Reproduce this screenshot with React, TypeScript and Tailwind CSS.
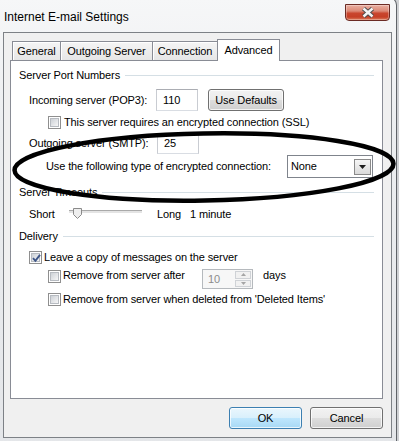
import React from 'react';

function Check({ checked = false }: { checked?: boolean }) {
  return (
    <span className="relative flex h-[13px] w-[13px] shrink-0 items-center justify-center border border-[#8f8f8f] bg-white">
      <span className="h-[9px] w-[9px] border border-[#b7bbc1] bg-[linear-gradient(135deg,#cdd1d6,#f6f6f7)]" />
      {checked && (
        <svg className="absolute left-[1px] top-[1px]" width="11" height="11" viewBox="0 0 11 11">
          <path d="M2 5.2 L4.4 7.8 L9 1.8" fill="none" stroke="#3e5688" strokeWidth="1.9" />
        </svg>
      )}
    </span>
  );
}

function Group({ title, className }: { title: string; className: string }) {
  return (
    <div className={`flex h-[14px] items-center pl-[8px] ${className}`}>
      <span className="leading-[14px]">{title}</span>
      <span className="ml-[5px] h-px flex-1 bg-[#d5dfe5]" />
    </div>
  );
}

const btnBase =
  'flex items-center justify-center rounded-[3px] border shadow-[inset_0_0_0_1px_rgba(255,255,255,0.75)]';
const btnGrey = 'border-[#707070] bg-[linear-gradient(180deg,#f2f2f2_0%,#ebebeb_48%,#dddddd_52%,#cfcfcf_100%)]';
const btnFocus = 'border-[#3c7fb1] bg-[linear-gradient(180deg,#eaf6fd_0%,#d9f0fc_48%,#bee6fd_52%,#a7d9f5_100%)]';

function Tab({ label, width }: { label: string; width: string }) {
  return (
    <div
      className={`-ml-px flex h-[19px] items-center justify-center border border-b-0 border-[#898c95] bg-[linear-gradient(180deg,#f5f5f5,#e6e6e6)] shadow-[inset_1px_1px_0_#ffffff] first:ml-0 ${width}`}
    >
      {label}
    </div>
  );
}

export default function App() {
  return (
    <div className="relative h-[441px] w-[399px] overflow-hidden bg-[#cfd1d4] font-['Liberation_Sans',Arial,sans-serif] text-[11px] tracking-[-0.12px] text-black">
      <div className="-mt-[3px] flex h-[447px] w-[397px] flex-col rounded-tr-[8px] border-r border-t border-[#5f6368] bg-[linear-gradient(180deg,#f6f7f8_0%,#eceef0_30%,#e4e6e9_100%)]">
        {/* title bar */}
        <div className="flex h-[34px] shrink-0 items-start">
          <span className="ml-[4px] mt-[12px] text-[12px] leading-[14px] tracking-normal">Internet E-mail Settings</span>
          <div className="ml-auto mr-[6px] mt-[6px] flex h-[17px] w-[45px] items-center justify-center rounded-b-[4px] border border-[#6b2b24] bg-[linear-gradient(180deg,#eab0a2_0%,#dc8a77_40%,#c9462e_55%,#c53f26_80%,#dc7e5e_100%)] shadow-[inset_0_0_0_1px_rgba(255,255,255,0.3)]">
            <svg width="14" height="11" viewBox="0 0 14 11">
              <path d="M2.5 1.5 L11.5 9.5 M11.5 1.5 L2.5 9.5" stroke="#4d4d4d" strokeWidth="4.4" />
              <path d="M2.5 1.5 L11.5 9.5 M11.5 1.5 L2.5 9.5" stroke="#f4f4f4" strokeWidth="2.4" />
            </svg>
          </div>
        </div>

        {/* client area */}
        <div className="ml-[3px] flex h-[406px] w-[389px] shrink-0 flex-col border border-[#7d8186] bg-[#f0f0f0]">
          <div className="ml-[8px] mt-[6px] flex h-[21px] items-end">
            <Tab label="General" width="w-[49px]" />
            <Tab label="Outgoing Server" width="w-[93px]" />
            <Tab label="Connection" width="w-[66px]" />
            <div className="relative z-10 -mb-px -ml-px flex h-[22px] w-[63px] items-center justify-center border border-b-0 border-[#898c95] bg-white">
              Advanced
            </div>
          </div>

          <div className="ml-[6px] flex h-[339px] w-[373px] flex-col border border-[#898c95] bg-white pr-[8px]">
            <Group title="Server Port Numbers" className="mt-[7px]" />

            <div className="mt-[7px] flex h-[22px] items-center pl-[18px]">
              <span className="w-[127px]">Incoming server (POP3):</span>
              <div className="flex h-[22px] w-[42px] items-center border border-[#abadb3] border-x-[#c9ccd2] border-b-[#d9dde3] bg-white pl-[6px]">
                110
              </div>
              <div className={`ml-[10px] h-[22px] w-[76px] ${btnBase} ${btnGrey}`}>Use Defaults</div>
            </div>

            <div className="mt-[5px] flex h-[13px] items-center pl-[37px]">
              <Check />
              <span className="ml-[3px]">This server requires an encrypted connection (SSL)</span>
            </div>

            <div className="mt-[4px] flex h-[21px] items-center pl-[18px]">
              <span className="w-[128px]">Outgoing server (SMTP):</span>
              <div className="flex h-[21px] w-[42px] items-center border border-[#abadb3] border-x-[#c9ccd2] border-b-[#d9dde3] bg-white pl-[6px]">
                25
              </div>
            </div>

            <div className="mt-[1px] flex h-[23px] items-center pl-[35px]">
              <span className="w-[241px]">Use the following type of encrypted connection:</span>
              <div className="flex h-[23px] w-[86px] items-center border border-[#7f848c] bg-white pl-[3px]">
                <span>None</span>
                <div className="ml-auto mr-[1px] flex h-[16px] w-[17px] items-center justify-center border border-[#8a8a8a] bg-[linear-gradient(180deg,#f6f6f6,#dadada)]">
                  <svg width="7" height="4" viewBox="0 0 7 4">
                    <path d="M0 0 H7 L3.5 4 Z" fill="#1e1e1e" />
                  </svg>
                </div>
              </div>
            </div>

            <Group title="Server Timeouts" className="mt-[7px]" />

            <div className="mt-[6px] flex h-[18px] items-center pl-[18px]">
              <span className="w-[40px]">Short</span>
              <div className="relative h-[18px] w-[73px]">
                <div className="mt-[5px] h-[3px] w-full border-t border-[#a9a9a9] bg-[#e4e4e4]" />
                <svg className="absolute left-[4px] top-[3px]" width="9" height="11" viewBox="0 0 9 11">
                  <path d="M0.5 0.5 H8.5 V6.5 L4.5 10.5 L0.5 6.5 Z" fill="#eeeeee" stroke="#8a8a8a" />
                </svg>
              </div>
              <span className="ml-[15px] w-[33px]">Long</span>
              <span>1 minute</span>
            </div>

            <Group title="Delivery" className="mt-[6px]" />

            <div className="mt-[8px] flex h-[13px] items-center pl-[18px]">
              <Check checked />
              <span className="ml-[2px]">Leave a copy of messages on the server</span>
            </div>

            <div className="mt-[5px] flex h-[20px] items-start pl-[37px]">
              <span className="mt-[1px]">
                <Check />
              </span>
              <span className="ml-[2px] w-[139px] leading-[13px]">Remove from server after</span>
              <div className="flex h-[20px] w-[51px] border border-[#b5b9bd] bg-[#f7f7f7]">
                <span className="flex flex-1 items-center pl-[5px] text-[#8c8c8c]">10</span>
                <div className="my-px mr-px flex w-[16px] flex-col gap-px">
                  <div className="flex flex-1 items-center justify-center border border-[#cfd2d6] bg-[#f1f1f1]">
                    <svg width="5" height="3" viewBox="0 0 5 3">
                      <path d="M0 3 H5 L2.5 0 Z" fill="#a5a5a5" />
                    </svg>
                  </div>
                  <div className="flex flex-1 items-center justify-center border border-[#cfd2d6] bg-[#f1f1f1]">
                    <svg width="5" height="3" viewBox="0 0 5 3">
                      <path d="M0 0 H5 L2.5 3 Z" fill="#a5a5a5" />
                    </svg>
                  </div>
                </div>
              </div>
              <span className="ml-[10px] leading-[13px]">days</span>
            </div>

            <div className="mt-[4px] flex h-[13px] items-center pl-[37px]">
              <Check />
              <span className="ml-[2px]">Remove from server when deleted from 'Deleted Items'</span>
            </div>
          </div>

          <div className="mt-[8px] flex justify-end gap-[8px] pr-[8px]">
            <div className={`h-[22px] w-[73px] ${btnBase} ${btnFocus}`}>OK</div>
            <div className={`h-[22px] w-[73px] ${btnBase} ${btnGrey}`}>Cancel</div>
          </div>
        </div>
      </div>

      <svg className="pointer-events-none absolute left-0 top-0" width="399" height="441" viewBox="0 0 399 441">
        <ellipse
          cx="204"
          cy="167"
          rx="189.5"
          ry="33.5"
          transform="rotate(-1 204 167)"
          fill="none"
          stroke="#000"
          strokeWidth="4.5"
        />
      </svg>
    </div>
  );
}
